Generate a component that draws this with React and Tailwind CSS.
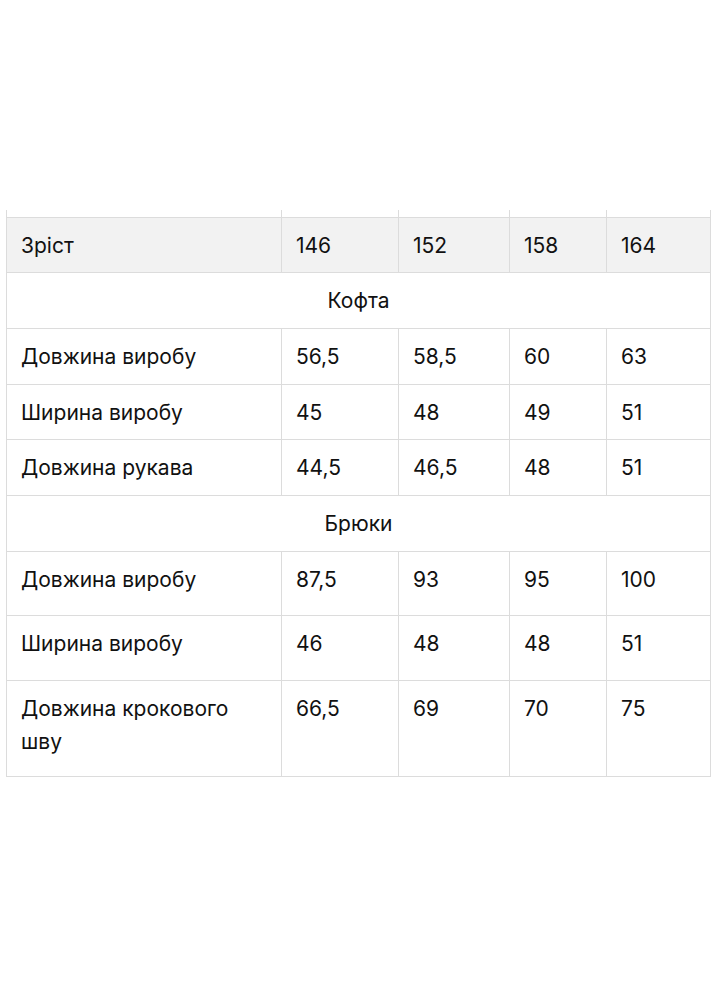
const sizes = ["146", "152", "158", "164"];

const sections = [
  {
    title: "Кофта",
    rows: [
      { name: "Довжина виробу", values: ["56,5", "58,5", "60", "63"], h: "h-[56px]" },
      { name: "Ширина виробу", values: ["45", "48", "49", "51"], h: "h-[55px]" },
      { name: "Довжина рукава", values: ["44,5", "46,5", "48", "51"], h: "h-[56px]" },
    ],
  },
  {
    title: "Брюки",
    rows: [
      { name: "Довжина виробу", values: ["87,5", "93", "95", "100"], h: "h-[64px]" },
      { name: "Ширина виробу", values: ["46", "48", "48", "51"], h: "h-[65px]" },
      { name: "Довжина крокового шву", values: ["66,5", "69", "70", "75"], h: "h-[96px]" },
    ],
  },
];

const cell = "border border-[#dcdcdc] align-top pt-[11px] pl-[14px] pr-5 text-left font-normal";

export default function App() {
  return (
    <div
      className="min-h-screen bg-white pt-[210px] text-[#111]"
      style={{ fontFamily: "Inter, 'Noto Sans', sans-serif" }}
    >
      <table className="ml-[6px] w-[705px] table-fixed border-collapse text-[21px] leading-[33px]">
        <colgroup>
          <col className="w-[275px]" />
          <col className="w-[117px]" />
          <col className="w-[111px]" />
          <col className="w-[97px]" />
          <col />
        </colgroup>
        <tbody>
          {/* cropped tail of the row above */}
          <tr className="h-[7px]">
            {[0, 1, 2, 3, 4].map((i) => (
              <td key={i} className="border-x border-[#dcdcdc] p-0" />
            ))}
          </tr>
          <tr className="h-[55px] bg-[#f2f2f2]">
            <th className={cell}>Зріст</th>
            {sizes.map((s) => (
              <th key={s} className={cell}>
                {s}
              </th>
            ))}
          </tr>
          {sections.map((sec) => (
            <Section key={sec.title} sec={sec} />
          ))}
        </tbody>
      </table>
    </div>
  );
}

function Section({ sec }) {
  return (
    <>
      <tr className="h-[56px]">
        <td colSpan={5} className="border border-[#dcdcdc] pt-[11px] text-center align-top">
          {sec.title}
        </td>
      </tr>
      {sec.rows.map((row) => (
        <tr key={row.name} className={row.h}>
          <td className={cell}>{row.name}</td>
          {row.values.map((v, i) => (
            <td key={i} className={cell}>
              {v}
            </td>
          ))}
        </tr>
      ))}
    </>
  );
}
